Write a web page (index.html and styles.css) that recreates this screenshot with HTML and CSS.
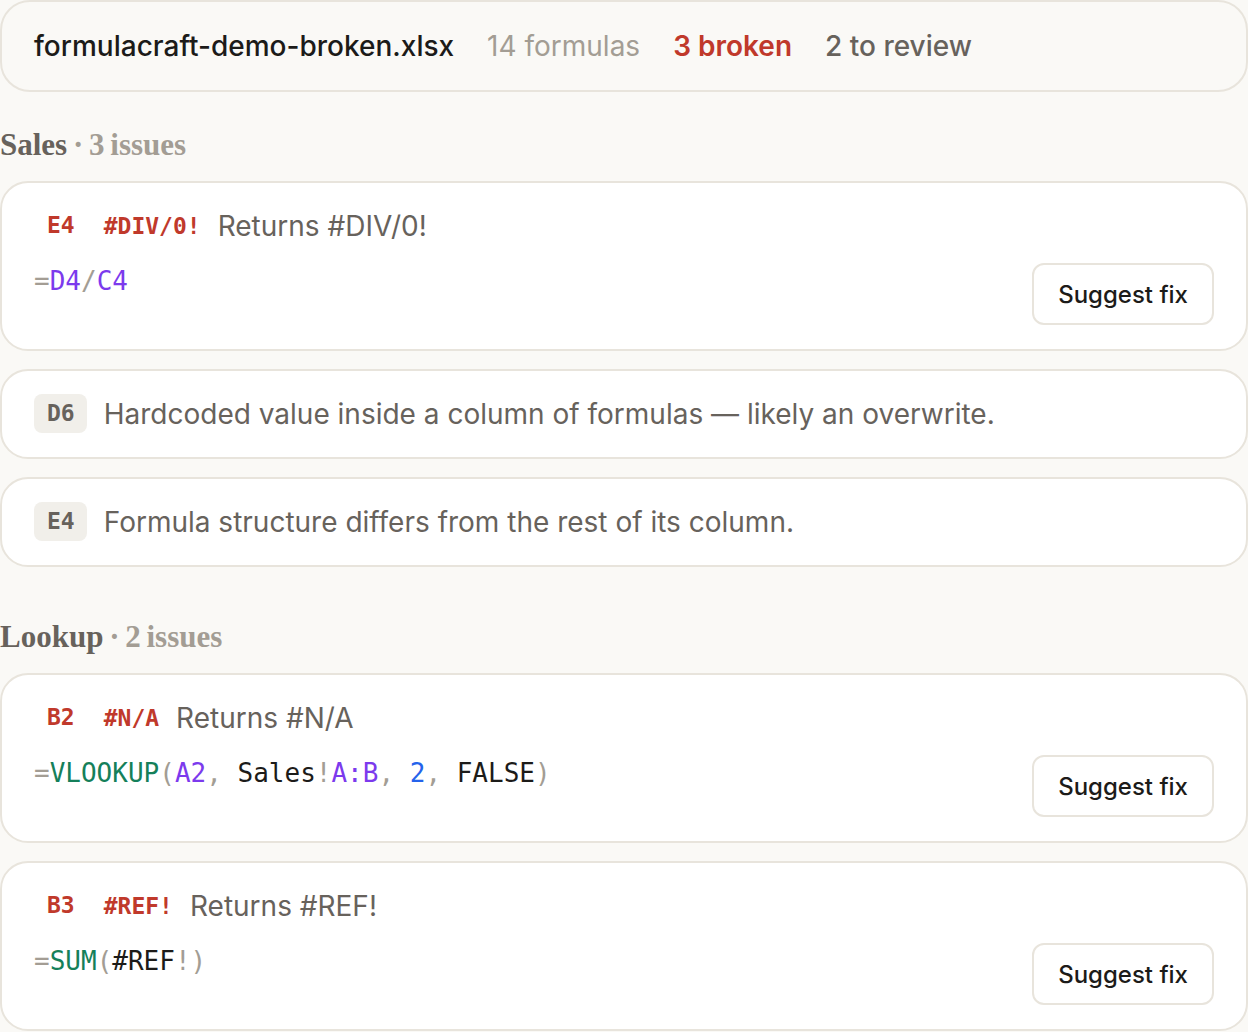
FILE: index.html
```html
<!DOCTYPE html>
<html lang="en">
<head>
    <meta charset="UTF-8">
    <meta name="viewport" content="width=device-width, initial-scale=1.0">
    <title>FormulaCraft – audit</title>
    <link rel="stylesheet" href="styles.css">
</head>
<body>
    <div class="audit">
        <div class="summary">
            <span class="file">formulacraft-demo-broken.xlsx</span>
            <span class="count">14 formulas</span>
            <span class="broken">3 broken</span>
            <span class="review">2 to review</span>
        </div>

        <!-- Sales sheet -->
        <section class="sheet">
            <h2 class="sheet-title">Sales <span class="muted">· 3 issues</span></h2>
            <div class="issues">
                <div class="issue">
                    <div class="issue-head">
                        <span class="cell-tag error">E4</span>
                        <span class="code">#DIV/0!</span>
                        <span class="desc">Returns #DIV/0!</span>
                    </div>
                    <div class="issue-body">
                        <code class="formula"><span class="op">=</span><span class="ref">D4</span><span class="op">/</span><span class="ref">C4</span></code>
                        <button class="fix">Suggest fix</button>
                    </div>
                </div>
                <div class="issue">
                    <div class="issue-head">
                        <span class="cell-tag">D6</span>
                        <span class="desc">Hardcoded value inside a column of formulas — likely an overwrite.</span>
                    </div>
                </div>
                <div class="issue">
                    <div class="issue-head">
                        <span class="cell-tag">E4</span>
                        <span class="desc">Formula structure differs from the rest of its column.</span>
                    </div>
                </div>
            </div>
        </section>

        <!-- Lookup sheet -->
        <section class="sheet">
            <h2 class="sheet-title">Lookup <span class="muted">· 2 issues</span></h2>
            <div class="issues">
                <div class="issue">
                    <div class="issue-head">
                        <span class="cell-tag error">B2</span>
                        <span class="code">#N/A</span>
                        <span class="desc">Returns #N/A</span>
                    </div>
                    <div class="issue-body">
                        <code class="formula"><span class="op">=</span><span class="fn">VLOOKUP</span><span class="op">(</span><span class="ref">A2</span><span class="op">, </span><span class="name">Sales</span><span class="op">!</span><span class="ref">A:B</span><span class="op">, </span><span class="num">2</span><span class="op">, </span><span class="name">FALSE</span><span class="op">)</span></code>
                        <button class="fix">Suggest fix</button>
                    </div>
                </div>
                <div class="issue">
                    <div class="issue-head">
                        <span class="cell-tag error">B3</span>
                        <span class="code">#REF!</span>
                        <span class="desc">Returns #REF!</span>
                    </div>
                    <div class="issue-body">
                        <code class="formula"><span class="op">=</span><span class="fn">SUM</span><span class="op">(</span><span class="name">#REF</span><span class="op">!)</span></code>
                        <button class="fix">Suggest fix</button>
                    </div>
                </div>
            </div>
        </section>
    </div>
</body>
</html>
```

FILE: styles.css
```css
:root {
    --bg: #faf9f6;
    --card: #ffffff;
    --line: #e8e4dc;
    --chip: #f1efea;
    --text: #1c1b19;
    --grey: #67625c;
    --light: #a39d94;
    --red: #c0392b;
    --purple: #7c3aed;
    --green: #15805a;
    --blue: #2563eb;
    --mono: 'DejaVu Sans Mono', 'Liberation Mono', monospace;
}

* {
    box-sizing: border-box;
    margin: 0;
    padding: 0;
}

body {
    background: var(--bg);
    color: var(--text);
    font-family: Inter, 'Noto Sans', sans-serif;
}

.audit {
    display: flex;
    flex-direction: column;
}

.summary {
    display: flex;
    align-items: center;
    gap: 33px;
    padding: 24px 32px;
    line-height: 40px;
    font-size: 28px;
    border: 2px solid var(--line);
    border-radius: 30px;
    margin-bottom: 35px;
}

.file {
    font-weight: 500;
    color: var(--text);
}

.count {
    color: var(--light);
}

.broken {
    color: var(--red);
    font-weight: 600;
}

.review {
    color: var(--grey);
    font-weight: 500;
}

.sheet + .sheet {
    margin-top: 52px;
}

.sheet-title {
    font-family: 'Liberation Serif', serif;
    font-size: 31px;
    font-weight: 700;
    line-height: 36px;
    word-spacing: -2px;
    color: var(--grey);
    margin-bottom: 18px;
}

.sheet-title .muted {
    color: var(--light);
}

.issues {
    display: flex;
    flex-direction: column;
    gap: 18px;
}

.issue {
    background: var(--card);
    border: 2px solid var(--line);
    border-radius: 28px;
    padding: 23px 32px 24px;
}

.issue-head {
    display: flex;
    align-items: center;
    gap: 17px;
    height: 39px;
}

.cell-tag {
    font-family: var(--mono);
    font-size: 23px;
    font-weight: 700;
    color: var(--grey);
    background: var(--chip);
    border-radius: 8px;
    height: 39px;
    line-height: 39px;
    padding: 0 12px 0 13px;
}

.cell-tag.error {
    background: transparent;
    color: var(--red);
}

.code {
    font-family: var(--mono);
    font-size: 23px;
    font-weight: 700;
    color: var(--red);
}

.desc {
    font-size: 28px;
    color: var(--grey);
}

.issue-body {
    display: flex;
    justify-content: space-between;
    align-items: flex-start;
    margin-top: 18px;
}

.formula {
    font-family: var(--mono);
    font-size: 26px;
    line-height: 36px;
    white-space: pre;
    color: var(--text);
}

.formula .op { color: var(--light); }
.formula .ref { color: var(--purple); }
.formula .fn { color: var(--green); }
.formula .num { color: var(--blue); }
.formula .name { color: var(--text); }

.fix {
    font-family: Inter, 'Noto Sans', sans-serif;
    font-size: 24px;
    font-weight: 500;
    color: var(--text);
    background: var(--card);
    border: 2px solid var(--line);
    border-radius: 12px;
    height: 62px;
    padding: 0 24px;
    cursor: pointer;
}
```
